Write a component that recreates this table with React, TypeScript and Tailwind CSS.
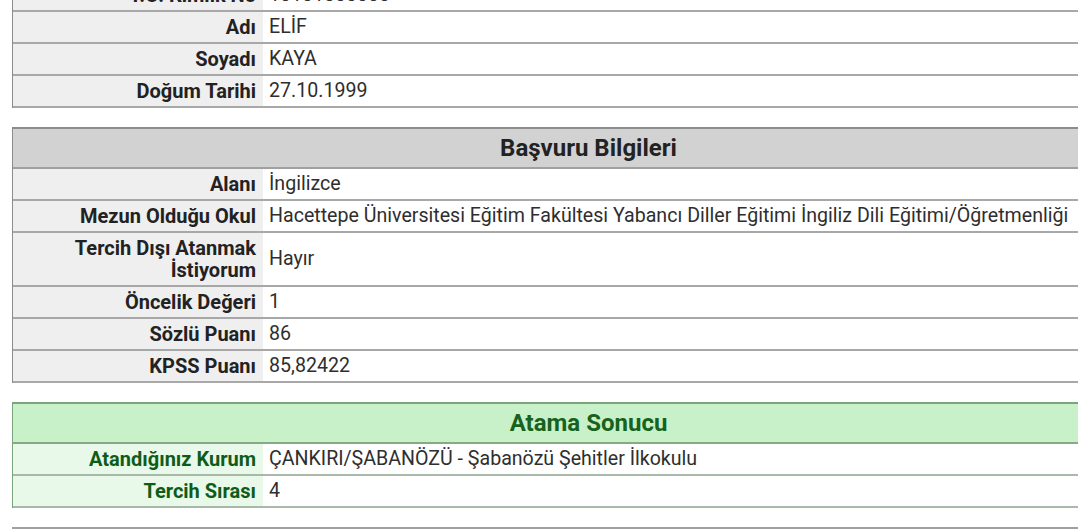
import React from "react";

type row = { label: React.ReactNode; value: string; tall?: boolean };

const kisisel: row[] = [
  { label: "T.C. Kimlik No", value: "10101000000" },
  { label: "Adı", value: "ELİF" },
  { label: "Soyadı", value: "KAYA" },
  { label: "Doğum Tarihi", value: "27.10.1999" },
];

const basvuru: row[] = [
  { label: "Alanı", value: "İngilizce" },
  {
    label: "Mezun Olduğu Okul",
    value:
      "Hacettepe Üniversitesi Eğitim Fakültesi Yabancı Diller Eğitimi İngiliz Dili Eğitimi/Öğretmenliği",
  },
  {
    label: (
      <>
        Tercih Dışı Atanmak
        <br />
        İstiyorum
      </>
    ),
    value: "Hayır",
    tall: true,
  },
  { label: "Öncelik Değeri", value: "1" },
  { label: "Sözlü Puanı", value: "86" },
  { label: "KPSS Puanı", value: "85,82422" },
];

const sonuc: row[] = [
  { label: "Atandığınız Kurum", value: "ÇANKIRI/ŞABANÖZÜ - Şabanözü Şehitler İlkokulu" },
  { label: "Tercih Sırası", value: "4" },
];

function InfoTable({
  title,
  rows,
  green,
}: {
  title?: string;
  rows: row[];
  green?: boolean;
}) {
  return (
    <div
      className={`w-[1152px] border-l ${
        green ? "border-[#7aa57a]" : "border-[#8c8c8c]"
      } ${title ? "border-t-2" : ""}`}
    >
      {title && (
        <div
          className={`h-[40px] flex items-center justify-center text-[24px] font-bold border-b-2 ${
            green
              ? "bg-[#c9f1c9] text-[#17621c] border-[#86aa86]"
              : "bg-[#d2d2d2] text-[#222] border-[#a0a0a0]"
          }`}
        >
          {title}
        </div>
      )}
      {rows.map((r, i) => (
        <div
          key={i}
          className={`grid grid-cols-[250px_1fr] border-b-2 ${
            green ? "border-[#a9b9a9]" : "border-[#a8a8a8]"
          } ${r.tall ? "h-[54px]" : "h-[32px]"}`}
        >
          <div
            className={`flex items-center justify-end text-right pr-[7px] text-[20px] font-bold leading-[22px] ${
              green ? "bg-[#e9f9e9] text-[#0f5c17]" : "bg-[#efefef] text-[#222]"
            }`}
          >
            <span>{r.label}</span>
          </div>
          <div className="flex items-center pl-[6px] text-[19.6px] text-[#2e2e2e] bg-white whitespace-nowrap">
            {r.value}
          </div>
        </div>
      ))}
    </div>
  );
}

export default function App() {
  return (
    <div className="w-[1078px] h-[529px] overflow-hidden bg-white font-['Roboto',sans-serif]">
      <div className="-mt-[20px] ml-[12px] flex flex-col gap-[19px]">
        <InfoTable rows={kisisel} />
        <InfoTable title="Başvuru Bilgileri" rows={basvuru} />
        <InfoTable title="Atama Sonucu" rows={sonuc} green />
        <div className="w-[1152px] h-[40px] border-t-2 border-l border-[#a0a0a0]" />
      </div>
    </div>
  );
}
